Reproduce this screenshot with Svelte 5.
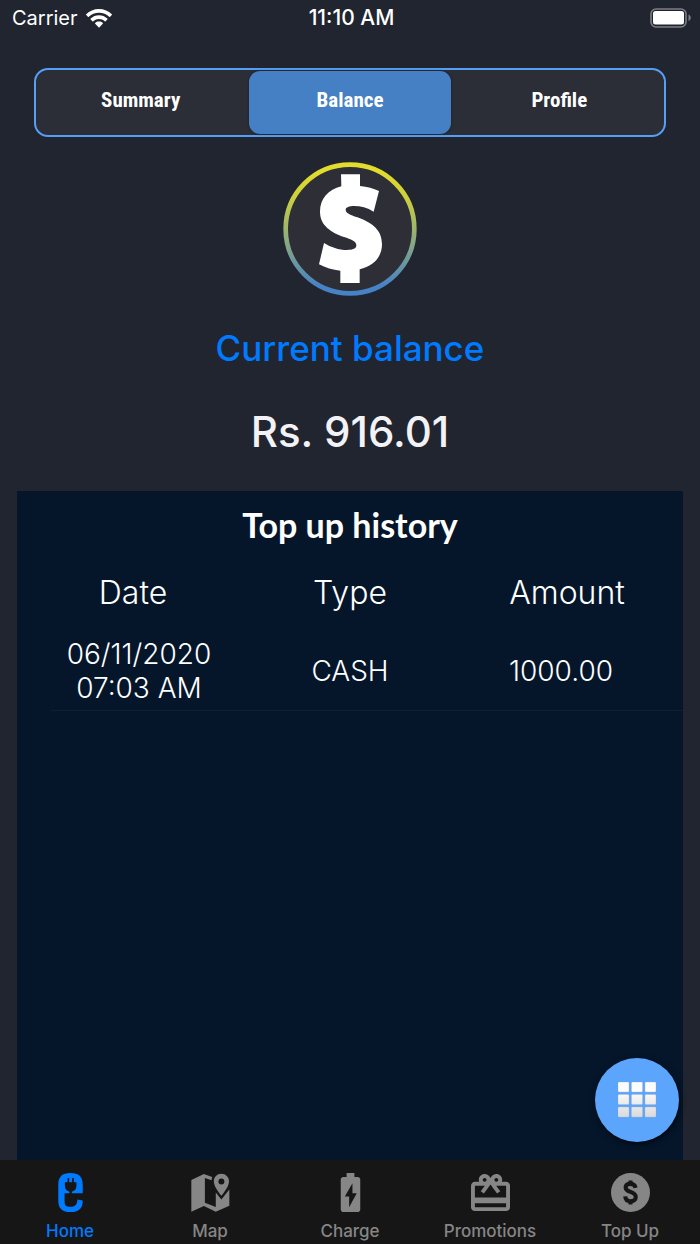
<script>
  const sections = ["Summary", "Balance", "Profile"];
  let section = "Balance";

  const topUps = [
    { date: "06/11/2020", time: "07:03 AM", type: "CASH", amount: "1000.00" }
  ];

  const pages = ["Home", "Map", "Charge", "Promotions", "Top Up"];
  let page = "Home";
</script>

<div class="app">
  <header class="status">
    <div class="status__carrier">
      <span>Carrier</span>
      <svg width="26" height="19" viewBox="0 0 26 19" aria-hidden="true">
        <path d="M13 0C8 0 3.5 2 .2 5.2a.6.6 0 0 0 0 .9l1.7 1.7a.6.6 0 0 0 .9 0A14.6 14.6 0 0 1 13 3.8c4 0 7.5 1.5 10.2 4a.6.6 0 0 0 .9 0l1.7-1.7a.6.6 0 0 0 0-.9C22.5 2 18 0 13 0z"/>
        <path d="M13 6.3c-3.2 0-6.1 1.2-8.3 3.3a.6.6 0 0 0 0 .9l1.7 1.7a.6.6 0 0 0 .9 0A8.3 8.3 0 0 1 13 10c2.2 0 4.2.8 5.7 2.2a.6.6 0 0 0 .9 0l1.7-1.7a.6.6 0 0 0 0-.9C19.1 7.5 16.2 6.3 13 6.3z"/>
        <path d="M13 12.5c-1.5 0-2.8.5-3.8 1.4a.6.6 0 0 0 0 .9l3.3 3.5a.7.7 0 0 0 1 0l3.3-3.5a.6.6 0 0 0 0-.9c-1-.9-2.3-1.4-3.8-1.4z"/>
      </svg>
    </div>
    <div class="status__time">11:10 AM</div>
    <svg class="status__battery" width="41" height="20" viewBox="0 0 41 20" aria-label="Battery full" role="img">
      <rect x="1" y="1" width="35" height="18" rx="5" fill="none" stroke="#7d7f86" stroke-width="1.6"/>
      <rect x="3" y="3" width="31" height="13.5" rx="2.5"/>
      <path d="M38.5 6.5v6.5c3-1.3 3-5.2 0-6.5z" fill="#7d7f86"/>
    </svg>
  </header>

  <nav class="segments" aria-label="Account">
    {#each sections as name}
      <button class="segment" class:segment--active={section === name} on:click={() => (section = name)}>
        {name}
      </button>
    {/each}
  </nav>

  <section class="balance">
    <svg width="134" height="134" viewBox="39 35 402 402" aria-hidden="true">
      <defs>
        <linearGradient id="ring" x1="0" y1="0" x2="0" y2="1">
          <stop offset="0.05" stop-color="#e2dc2c"/>
          <stop offset="0.25" stop-color="#cdd03c"/>
          <stop offset="0.95" stop-color="#4682c6"/>
        </linearGradient>
      </defs>
      <circle cx="240" cy="236" r="193" fill="#2d2e36" stroke="url(#ring)" stroke-width="14"/>
      <path fill="#fff" d="M213 72H270V107C292 109 310 114 327 122L311 184C292 172 272 167 252 167C238 167 227 171 227 178C227 188 240 193 262 201C306 217 336 238 336 282C336 322 308 348 269 357V398H211V361C188 359 166 352 147 342L162 278C183 291 206 299 231 299C249 299 259 295 259 285C259 272 243 267 222 260C184 246 150 226 150 184C150 145 175 117 214 108Z"/>
    </svg>
    <h1 class="balance__label">Current balance</h1>
    <p class="balance__value">Rs. 916.01</p>
  </section>

  <main class="history">
    <h2 class="history__title">Top up history</h2>
    <table class="history__table">
      <thead>
        <tr>
          <th scope="col">Date</th>
          <th scope="col">Type</th>
          <th scope="col">Amount</th>
        </tr>
      </thead>
      <tbody>
        {#each topUps as topUp}
          <tr>
            <td>{topUp.date}<br>{topUp.time}</td>
            <td>{topUp.type}</td>
            <td>{topUp.amount}</td>
          </tr>
        {/each}
      </tbody>
    </table>
  </main>

  <button class="fab" aria-label="Menu">
    <svg width="38" height="36" viewBox="0 0 38 36" aria-hidden="true">
      <defs>
        <linearGradient id="keys" gradientUnits="userSpaceOnUse" x1="0" y1="0" x2="0" y2="36">
          <stop offset="0.25" stop-color="#fcfcfc"/>
          <stop offset="1" stop-color="#d9d9d9"/>
        </linearGradient>
      </defs>
      {#each [0, 12.5, 25] as y}
        {#each [0, 13.5, 27] as x}
          <rect {x} {y} width="11" height="10" rx="1" fill="url(#keys)" stroke="#b9bdc4" stroke-width="0.4"/>
        {/each}
      {/each}
    </svg>
  </button>

  <nav class="tabbar" aria-label="Main">
    {#each pages as name}
      <button class="tab" class:tab--active={page === name} on:click={() => (page = name)}>
        {#if name === "Home"}
          <svg width="25" height="39" viewBox="174 69 74 118" aria-hidden="true">
            <path d="M211 69C186 69 174 80 174 104V152C174 176 186 187 211 187S248 176 248 152L232 149C231 164 226 171 211 171S193 166 193 152V130H208V126C198 123 194 117 194 107V97H202V84H207V97H216V84H221V97H229V107C229 117 225 123 215 126V130H248V104C248 80 236 69 211 69Z"/>
          </svg>
        {:else if name === "Map"}
          <svg width="39" height="39" viewBox="572 69 118 118" aria-hidden="true">
            <path d="M573 90L611 72L636 81L634 91L614 84V159L647 172V128L664 149L688 119V168L647 186L611 169L573 186Z"/>
            <path fill-rule="evenodd" d="M664 71C651 71 641 81 641 94C641 109 654 125 664 138C674 125 687 109 687 94C687 81 677 71 664 71ZM664 104A9 9 0 1 1 664 86A9 9 0 1 1 664 104Z"/>
          </svg>
        {:else if name === "Charge"}
          <svg width="39" height="39" viewBox="2 2 20 20" aria-hidden="true">
            <path d="M15.67 4H14V2h-4v2H8.33C7.6 4 7 4.6 7 5.33v15.33C7 21.4 7.6 22 8.33 22h7.33c.74 0 1.34-.6 1.34-1.33V5.33C17 4.6 16.4 4 15.67 4zM11.3 19.5v-5.4H9.1L13 7.2v5.2h2.2z"/>
          </svg>
        {:else if name === "Promotions"}
          <svg width="39" height="39" viewBox="2 1.5 20 20" aria-hidden="true">
            <path d="M20 6h-2.18c.11-.31.18-.65.18-1 0-1.66-1.34-3-3-3-1.05 0-1.96.54-2.5 1.35l-.5.67-.5-.68C10.96 2.54 10.05 2 9 2 7.34 2 6 3.34 6 5c0 .35.07.69.18 1H4c-1.11 0-1.99.89-1.99 2L2 19c0 1.11.89 2 2 2h16c1.11 0 2-.89 2-2V8c0-1.11-.89-2-2-2zm-5-2c.55 0 1 .45 1 1s-.45 1-1 1-1-.45-1-1 .45-1 1-1zM9 4c.55 0 1 .45 1 1s-.45 1-1 1-1-.45-1-1 .45-1 1-1zm11 15H4v-2h16v2zm0-5H4V8h5.08L7 10.83 8.62 12 11 8.76l1-1.36 1 1.36L15.38 12 17 10.83 14.92 8H20v6z"/>
          </svg>
        {:else}
          <svg width="39" height="39" viewBox="2 2 20 20" aria-hidden="true">
            <circle cx="12" cy="12" r="10"/>
            <path class="tab__cutout" d="M14.6 9.6C14.3 8.2 13.5 7.6 12 7.6C10.4 7.6 9.5 8.3 9.5 9.4C9.5 10.8 10.6 11.2 12 11.7C13.7 12.3 14.7 12.9 14.7 14.3C14.7 15.6 13.6 16.5 12 16.5C10.4 16.5 9.4 15.6 9.3 14M12 5.9V7.6M12 16.5V18.2"/>
          </svg>
        {/if}
        <span>{name}</span>
      </button>
    {/each}
  </nav>
</div>

<style>
  :global(body) {
    background: #21252f;
  }
  .app {
    display: flex;
    flex-direction: column;
    min-height: 100vh;
    background: #21252f;
    color: #fff;
    font-family: Inter, "Liberation Sans", sans-serif;
  }
  button {
    border: 0;
    padding: 0;
    background: none;
    color: inherit;
    font: inherit;
    cursor: pointer;
  }
  svg {
    display: block;
    fill: currentColor;
  }

  .status {
    display: grid;
    grid-template-columns: 1fr auto 1fr;
    align-items: center;
    height: 36px;
    padding: 0 9px 0 12px;
    font-size: 20px;
    line-height: 24px;
  }
  .status__carrier {
    display: flex;
    align-items: center;
    gap: 8px;
  }
  .status__time {
    font-size: 21px;
    font-weight: 500;
  }
  .status__battery {
    justify-self: end;
  }

  .segments {
    display: flex;
    height: 65px;
    margin: 32px 34px 0;
    border: 2px solid #559ff5;
    border-radius: 14px;
    background: #2b2d37;
  }
  .segment {
    flex: 1;
    margin: 1px 4px;
    padding-bottom: 6px;
    border-radius: 11px;
    font-family: "Liberation Sans Narrow", "Roboto Condensed", "Liberation Sans", sans-serif;
    font-size: 21px;
    font-weight: 700;
  }
  .segment--active {
    background: #4680c4;
    box-shadow: 0 0 3px rgba(0, 0, 0, 0.3);
  }

  .balance {
    display: flex;
    flex-direction: column;
    align-items: center;
    padding-top: 25px;
  }
  .balance__label {
    margin: 28px 0 0;
    color: #007aff;
    font-size: 35px;
    font-weight: 500;
    line-height: 48px;
  }
  .balance__value {
    margin: 32px 0 31px;
    color: #f2f2f7;
    font-size: 42px;
    font-weight: 500;
    line-height: 56px;
  }

  .history {
    flex: 1;
    margin: 0 17px;
    background: #05162b;
  }
  .history__title {
    margin: 14px 0 16px;
    font-family: Lato, sans-serif;
    font-size: 34px;
    font-weight: 700;
    line-height: 40px;
    text-align: center;
  }
  .history__table {
    width: 100%;
    table-layout: fixed;
    border-collapse: collapse;
    font-weight: 300;
    text-align: center;
  }
  .history__table th {
    padding: 12px 0 24px;
    font-size: 32px;
    font-weight: 300;
    line-height: 40px;
  }
  .history__table td {
    padding: 0 0 6px;
    font-size: 28px;
    line-height: 34px;
  }
  .history__table th:first-child {
    padding-left: 10px;
  }
  .history__table th:last-child {
    padding-right: 10px;
  }
  .history__table td:first-child {
    padding-left: 22px;
  }
  .history__table td:last-child {
    padding-right: 22px;
  }
  /* separator is inset on the left only */
  .history__table tbody tr {
    background: linear-gradient(#0e1f34, #0e1f34) right bottom / calc(100% - 34px) 1px no-repeat;
  }

  .fab {
    position: fixed;
    right: 21px;
    bottom: 102px;
    display: flex;
    align-items: center;
    justify-content: center;
    width: 84px;
    height: 84px;
    border-radius: 50%;
    background: #5ba5fc;
    box-shadow: 1px 2px 6px rgba(0, 0, 0, 0.7);
  }

  .tabbar {
    display: flex;
    height: 84px;
    background: #161616;
  }
  .tab {
    flex: 1;
    display: flex;
    flex-direction: column;
    align-items: center;
    gap: 9px;
    padding-top: 13px;
    color: #868686;
    font-size: 17px;
    font-weight: 500;
    line-height: 20px;
  }
  .tab--active {
    color: #007aff;
  }
  .tab__cutout {
    fill: none;
    stroke: #161616;
    stroke-width: 2.1;
  }
</style>
